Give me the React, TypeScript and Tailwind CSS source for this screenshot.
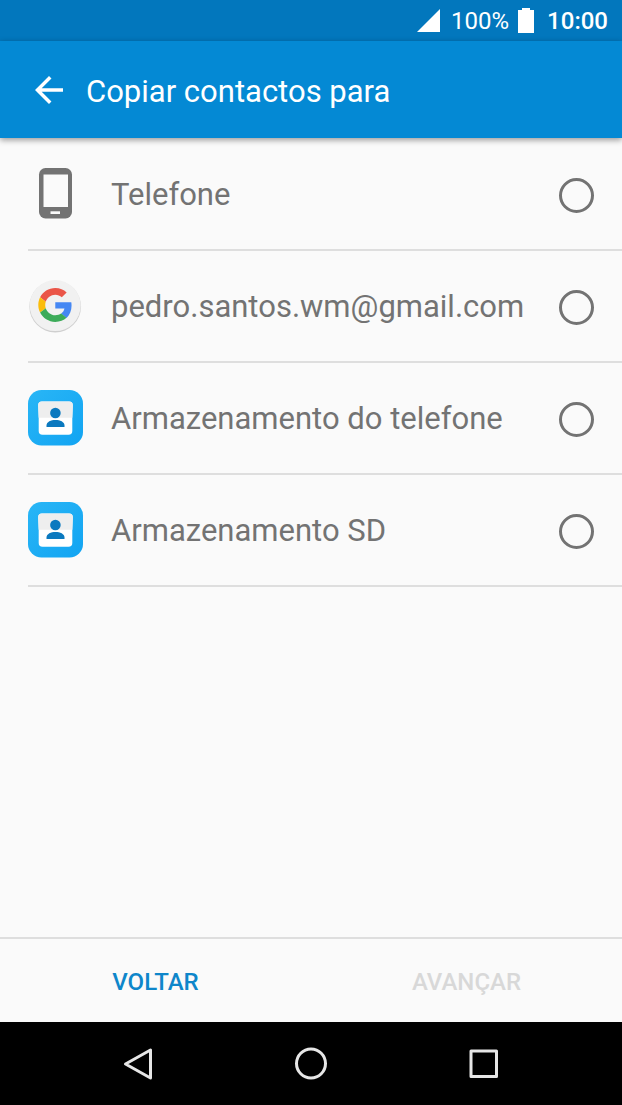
import { ReactNode, useState } from "react";

type Target = {
  id: string;
  label: string;
  icon: ReactNode;
};

const TARGETS: Target[] = [
  { id: "phone", label: "Telefone", icon: <PhoneIcon /> },
  { id: "google", label: "pedro.santos.wm@gmail.com", icon: <GoogleIcon /> },
  {
    id: "storage",
    label: "Armazenamento do telefone",
    icon: <ContactsIcon />,
  },
  { id: "sd", label: "Armazenamento SD", icon: <ContactsIcon /> },
];

export default function App() {
  const [selected, setSelected] = useState<string | null>(null);

  return (
    <div className="flex min-h-screen flex-col bg-[#fafafa] font-[Roboto,sans-serif]">
      <StatusBar />
      <header className="z-10 flex h-[97px] items-center gap-4 bg-[#0489d4] px-7 text-white shadow-[0_2px_6px_rgba(0,0,0,0.4)]">
        <button type="button" aria-label="Voltar atrás">
          <svg viewBox="0 0 24 24" className="size-[42px]" fill="currentColor">
            <path d="M20 11H7.83l5.59-5.59L12 4l-8 8 8 8 1.41-1.41L7.83 13H20v-2z" />
          </svg>
        </button>
        <h1 className="pt-1 text-[31px] leading-10">Copiar contactos para</h1>
      </header>

      <main className="flex-1 pt-px">
        <ul className="pl-7">
          {TARGETS.map((target) => (
            <li key={target.id} className="border-b-2 border-[#dedede]">
              <label className="flex h-[110px] items-center gap-7 pt-0.5 pr-7 text-[31px] leading-10 text-[#737373]">
                {target.icon}
                <span className="flex-1">{target.label}</span>
                <input
                  type="radio"
                  name="target"
                  checked={selected === target.id}
                  onChange={() => setSelected(target.id)}
                  className="size-[35px] appearance-none rounded-full border-3 border-[#737373] checked:border-[10px] checked:border-[#0489d4]"
                />
              </label>
            </li>
          ))}
        </ul>
      </main>

      <footer className="grid h-[85px] grid-cols-2 border-t-2 border-[#dedede] text-2xl font-medium">
        <button type="button" className="pt-0.5 text-[#0e86ca]">
          VOLTAR
        </button>
        <button
          type="button"
          disabled={!selected}
          className="pt-0.5 text-[#0e86ca] disabled:text-[#d8d8d8]"
        >
          AVANÇAR
        </button>
      </footer>
      <NavigationBar />
    </div>
  );
}

function StatusBar() {
  return (
    <div className="flex h-[41px] items-center justify-end bg-[#0277bd] pt-px pr-[14px] text-2xl text-white">
      <svg viewBox="0 0 23 25" className="mr-[11px] h-[25px] w-[23px]">
        <path d="M23 0v23H0z" fill="currentColor" />
      </svg>
      <span>100%</span>
      <svg viewBox="0 0 16 27" className="mr-[13px] ml-[9px] h-[27px] w-4">
        <path d="M4 0h8v2h4v23H0V2h4z" fill="currentColor" />
      </svg>
      <span className="font-medium">10:00</span>
    </div>
  );
}

function NavigationBar() {
  return (
    <nav className="grid h-[83px] grid-cols-3 bg-black px-13 text-[#e6e6e6]">
      <button
        type="button"
        aria-label="Anterior"
        className="flex items-center justify-center"
      >
        <NavIcon>
          <path d="M30.500 4v28L5.500 18z" />
        </NavIcon>
      </button>
      <button
        type="button"
        aria-label="Início"
        className="flex items-center justify-center"
      >
        <NavIcon>
          <circle cx="18" cy="17.500" r="14.500" />
        </NavIcon>
      </button>
      <button
        type="button"
        aria-label="Recentes"
        className="flex items-center justify-center"
      >
        <NavIcon>
          <rect x="5" y="5" width="25.500" height="25.500" />
        </NavIcon>
      </button>
    </nav>
  );
}

function NavIcon({ children }: { children: ReactNode }) {
  return (
    <svg
      viewBox="0 0 36 36"
      className="size-9"
      fill="none"
      stroke="currentColor"
      strokeWidth="3"
      strokeLinejoin="round"
    >
      {children}
    </svg>
  );
}

function PhoneIcon() {
  return (
    <svg viewBox="0 2 55 56" className="h-[56px] w-[55px]">
      <rect x="11" y="3" width="33" height="50.500" rx="6.500" fill="#737373" />
      <path d="M15.500 9.500h24.500v32.500H15.500z" fill="#fafafa" />
      <path d="M22.500 46.300h9.500v2.700h-9.500z" fill="#fafafa" />
    </svg>
  );
}

function GoogleIcon() {
  return (
    <svg viewBox="0 1 55 56" className="h-[56px] w-[55px]">
      <circle cx="27.200" cy="28.600" r="25.800" fill="#cfcfcf" />
      <circle cx="27.200" cy="27.600" r="25.500" fill="#f1f1f1" />
      <g transform="translate(10.300 10) scale(0.708)">
        <path
          fill="#ea5548"
          d="M24 9.500c3.540 0 6.710 1.220 9.210 3.600l6.850-6.850C35.900 2.380 30.470 0 24 0 14.620 0 6.510 5.380 2.560 13.220l7.980 6.190C12.430 13.720 17.740 9.500 24 9.500z"
        />
        <path
          fill="#4587f3"
          d="M46.980 24.550c0-1.570-.15-3.090-.38-4.550H24v9.020h12.940c-.58 2.960-2.260 5.480-4.780 7.180l7.730 6c4.510-4.180 7.090-10.360 7.090-17.650z"
        />
        <path
          fill="#fbbd0b"
          d="M10.530 28.590c-.48-1.450-.76-2.990-.76-4.590s.27-3.140.76-4.590l-7.980-6.190C.92 16.460 0 20.120 0 24c0 3.880.92 7.540 2.560 10.780l7.970-6.190z"
        />
        <path
          fill="#3cab59"
          d="M24 48c6.480 0 11.930-2.130 15.890-5.810l-7.730-6c-2.150 1.450-4.920 2.300-8.160 2.300-6.260 0-11.570-4.220-13.470-9.910l-7.980 6.190C6.510 42.620 14.620 48 24 48z"
        />
      </g>
    </svg>
  );
}

function ContactsIcon() {
  return (
    <svg viewBox="0 1 55 56" className="h-[56px] w-[55px] overflow-visible">
      <defs>
        <linearGradient id="tile" x1="0" y1="0" x2="1" y2="1">
          <stop offset="0" stopColor="#29b6f6" />
          <stop offset="1" stopColor="#12a4f2" />
        </linearGradient>
      </defs>
      <rect width="55" height="55.500" rx="13.500" fill="url(#tile)" />
      <path
        d="M14 11.500h27q4 0 3.800 4L44.300 28v13q0 3.800-3.800 3.800h-26q-3.800 0-3.800-3.800V28l-.5-12.500q-.2-4 3.800-4z"
        fill="#fff"
      />
      <path
        d="M14 11.500h27q4 0 3.800 4L44.300 27.800H10.700l-.5-12.300q-.2-4 3.800-4z"
        fill="#eee"
      />
      <circle cx="27.400" cy="23" r="5.300" fill="#0b79bf" />
      <path
        d="M18.500 37v-1.500c0-3.700 4.500-5.500 9-5.500s9 1.800 9 5.500V37z"
        fill="#0b79bf"
      />
    </svg>
  );
}
